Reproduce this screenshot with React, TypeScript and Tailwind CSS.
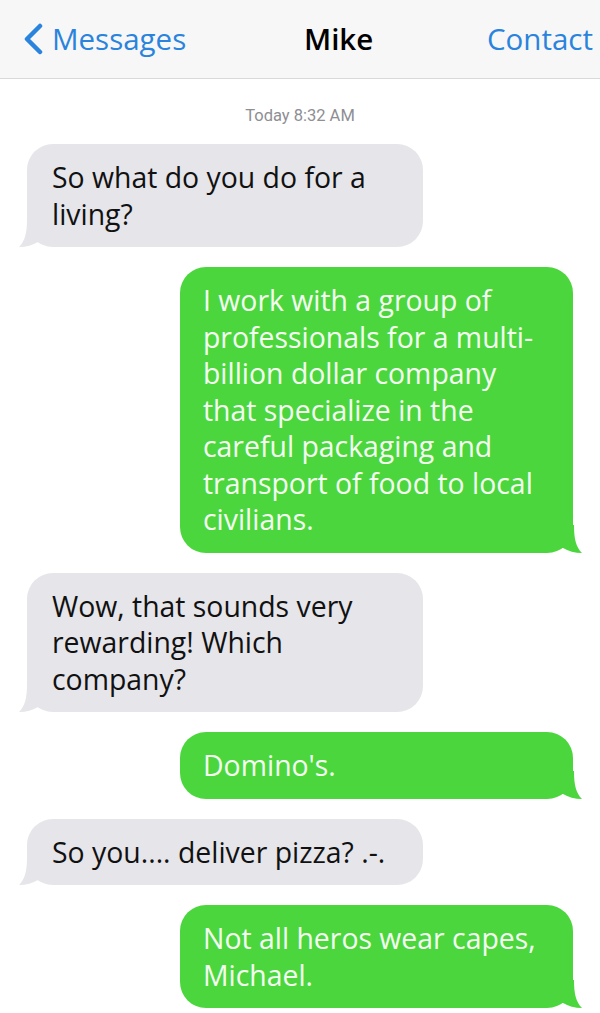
import React from "react";

const font = { fontFamily: '"Open Sans", "Noto Sans", sans-serif' };

function GrayTail() {
  return (
    <svg className="absolute left-[-8px] bottom-0" width="30" height="30" viewBox="0 0 30 30">
      <path d="M8 2 C8 16 6 24 0 30 C7 30 14 28 19 25 L30 25 L30 2 Z" fill="#e5e5ea" />
    </svg>
  );
}

function GreenTail() {
  return (
    <svg className="absolute right-[-9px] bottom-0" width="30" height="30" viewBox="0 0 30 30">
      <path d="M22 2 C22 16 24 24 30 30 C23 30 16 28 11 25 L0 25 L0 2 Z" fill="#4cd63e" />
    </svg>
  );
}

function Gray({ children }: { children: React.ReactNode }) {
  return (
    <div className="relative ml-[27px] w-[396px]">
      <GrayTail />
      <div className="relative rounded-[26px] bg-[#e5e5ea] pl-[25px] pr-4 py-[15px] text-[28.4px] leading-[36.5px] text-[#111]">
        {children}
      </div>
    </div>
  );
}

function Green({ children }: { children: React.ReactNode }) {
  return (
    <div className="relative ml-[180px] w-[393px]">
      <GreenTail />
      <div className="relative rounded-[26px] bg-[#4cd63e] pl-[23px] pr-4 py-[15px] text-[28.4px] leading-[36.5px] text-[#f4fff2]">
        {children}
      </div>
    </div>
  );
}

export default function App() {
  return (
    <div className="w-[600px] h-[1013px] overflow-hidden bg-white" style={font}>
      <div className="h-[79px] bg-[#f7f7f7] border-b border-[#d9d9d9] flex items-center justify-between pl-[22px] pr-[7px]">
        <div className="flex items-center gap-[8px] text-[#2a83dc] text-[29.5px]">
          <svg width="22" height="32" viewBox="0 0 22 32">
            <path d="M18 3 L5 16 L18 29" fill="none" stroke="#2a83dc" strokeWidth="4.5" strokeLinecap="round" strokeLinejoin="round" />
          </svg>
          <span>Messages</span>
        </div>
        <div className="text-[29.5px] font-semibold text-black ml-[4px]">Mike</div>
        <div className="text-[29.5px] text-[#2a83dc]">Contact</div>
      </div>
      <div className="flex flex-col pt-[25px]">
        <div className="text-center text-[16.5px] leading-[24px] text-[#8e8e93] mb-[16px]" style={{ fontFamily: 'Roboto, "Liberation Sans", sans-serif' }}>
          Today 8:32 AM
        </div>
        <div className="flex flex-col gap-[20px]">
          <Gray>
            So what do you do for a<br />living?
          </Gray>
          <Green>
            I work with a group of<br />professionals for a multi-<br />billion dollar company<br />that specialize in the<br />careful packaging and<br />transport of food to local<br />civilians.
          </Green>
          <Gray>
            Wow, that sounds very<br />rewarding! Which<br />company?
          </Gray>
          <Green>Domino's.</Green>
          <Gray>So you.... deliver pizza? .-.</Gray>
          <Green>
            Not all heros wear capes,<br />Michael.
          </Green>
        </div>
      </div>
    </div>
  );
}
